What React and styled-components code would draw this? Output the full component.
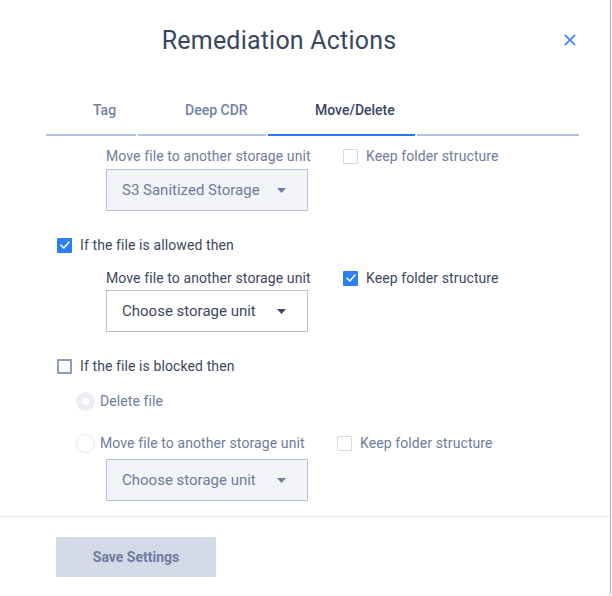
import styled, { createGlobalStyle } from 'styled-components';

const GlobalStyle = createGlobalStyle`
  html, body { margin: 0; padding: 0; background: #ffffff; }
  body { font-family: Roboto, "Liberation Sans", sans-serif; }
`;

const CheckIcon = () => (
  <svg width="10" height="8" viewBox="0 0 10 8" fill="none">
    <path d="M1 4.2 L3.8 7 L9 1" stroke="#ffffff" strokeWidth="1.6" strokeLinecap="round" strokeLinejoin="round" />
  </svg>
);

const Caret = ({ muted }) => (
  <svg width="9" height="5" viewBox="0 0 9 5">
    <path d="M0 0 H9 L4.5 5 Z" fill={muted ? '#6f7b9c' : '#3d4761'} />
  </svg>
);

const CheckBox = ({ checked, tone }) => (
  <Box $checked={checked} $tone={tone}>{checked && <CheckIcon />}</Box>
);

const Select = ({ value, muted }) => (
  <SelectBox $muted={muted}>
    <span>{value}</span>
    <Caret muted={muted} />
  </SelectBox>
);

const App = () => {
  return (
    <>
      <GlobalStyle />
      <Modal>
        <Header>
          <Title>Remediation Actions</Title>
          <Close aria-label="close">
            <svg width="12" height="12" viewBox="0 0 12 12">
              <path d="M1 1 L11 11 M11 1 L1 11" stroke="#2979ff" strokeWidth="1.6" />
            </svg>
          </Close>
        </Header>

        <Tabs>
          <Tab $w={90}>Tag</Tab>
          <Tab $w={128}>Deep CDR</Tab>
          <Tab $w={147} $active>Move/Delete</Tab>
          <Tab $w={162} />
        </Tabs>

        <Content>
          <SubRow $top={10}>
            <Field>
              <Label $muted>Move file to another storage unit</Label>
              <Select value="S3 Sanitized Storage" muted />
            </Field>
            <Option>
              <CheckBox tone="light" />
              <Label $muted>Keep folder structure</Label>
            </Option>
          </SubRow>

          <Option $top={24} $left={57}>
            <CheckBox checked />
            <Label>If the file is allowed then</Label>
          </Option>

          <SubRow $top={13}>
            <Field $gap={2}>
              <Label>Move file to another storage unit</Label>
              <Select value="Choose storage unit" />
            </Field>
            <Option>
              <CheckBox checked />
              <Label>Keep folder structure</Label>
            </Option>
          </SubRow>

          <Option $top={24} $left={57}>
            <CheckBox tone="mid" />
            <Label>If the file is blocked then</Label>
          </Option>

          <RadioRow $top={15}>
            <Radio $filled />
            <Label $muted>Delete file</Label>
          </RadioRow>

          <RadioRow $top={22}>
            <Radio />
            <Label $muted>Move file to another storage unit</Label>
            <Keep>
              <CheckBox tone="light" />
              <Label $muted>Keep folder structure</Label>
            </Keep>
          </RadioRow>

          <SelectWrap>
            <Select value="Choose storage unit" muted />
          </SelectWrap>
        </Content>

        <Footer>
          <SaveButton>Save Settings</SaveButton>
        </Footer>
      </Modal>
    </>
  );
};

export default App;

const Modal = styled.div`
  width: 610px;
  height: 596px;
  border-right: 1px solid #aeb2bb;
  border-bottom-right-radius: 4px;
  background: #ffffff;
  display: flex;
  flex-direction: column;
  overflow: hidden;
`;

const Header = styled.header`
  display: flex;
  align-items: center;
  height: 80px;
  padding-right: 28px;
`;

const Title = styled.h1`
  flex: 1;
  margin: 0;
  text-align: center;
  font-size: 25px;
  font-weight: 400;
  color: #3a4561;
  letter-spacing: 0.2px;
`;

const Close = styled.button`
  width: 24px;
  height: 24px;
  padding: 0;
  border: none;
  background: transparent;
  display: flex;
  align-items: center;
  justify-content: center;
  cursor: pointer;
`;

const Tabs = styled.nav`
  display: flex;
  gap: 2px;
  margin-left: 46px;
`;

const Tab = styled.div`
  width: ${p => p.$w}px;
  box-sizing: border-box;
  padding: 10px 0 14px 47px;
  height: 56px;
  display: flex;
  align-items: flex-end;
  line-height: 20px;
  font-size: 14px;
  font-weight: 500;
  color: ${p => (p.$active ? '#3a4561' : '#7381a6')};
  border-bottom: 2px solid ${p => (p.$active ? '#2979ff' : '#b6c0da')};
`;

const Content = styled.section`
  flex: 1;
  display: flex;
  flex-direction: column;
  border-bottom: 1px solid #e3e7ef;
`;

const SubRow = styled.div`
  display: flex;
  margin-top: ${p => p.$top || 0}px;
  padding-left: 106px;
`;

const Field = styled.div`
  width: 237px;
  display: flex;
  flex-direction: column;
  gap: ${p => p.$gap ?? 3}px;
`;

const Option = styled.label`
  display: flex;
  align-items: center;
  gap: 8px;
  height: 20px;
  margin-top: ${p => p.$top || 0}px;
  padding-left: ${p => p.$left || 0}px;
`;

const Keep = styled.label`
  position: absolute;
  left: 337px;
  top: 0;
  display: flex;
  align-items: center;
  gap: 8px;
  height: 20px;
`;

const Label = styled.span`
  font-size: 14px;
  line-height: 20px;
  letter-spacing: 0.1px;
  color: ${p => (p.$muted ? '#6f7b9c' : '#3d4761')};
  white-space: nowrap;
`;

const Box = styled.span`
  width: 15px;
  height: 15px;
  box-sizing: border-box;
  display: inline-flex;
  align-items: center;
  justify-content: center;
  border-radius: 1px;
  background: ${p => (p.$checked ? '#2b7ff7' : '#ffffff')};
  border: ${p =>
    p.$checked ? 'none' : p.$tone === 'mid' ? '2px solid #8c9bc0' : '1.5px solid #d4d9e5'};
`;

const SelectBox = styled.div`
  width: 202px;
  height: 42px;
  box-sizing: border-box;
  display: flex;
  align-items: center;
  justify-content: space-between;
  padding: 0 21px 0 15px;
  background: ${p => (p.$muted ? '#f3f4f8' : '#ffffff')};
  border: 1px solid #b7c1da;
  font-size: 15px;
  color: ${p => (p.$muted ? '#6f7b9c' : '#3d4761')};
`;

const RadioRow = styled.div`
  position: relative;
  display: flex;
  align-items: center;
  gap: 5px;
  height: 20px;
  margin-top: ${p => p.$top || 0}px;
  padding-left: 76px;
`;

const Radio = styled.span`
  width: 19px;
  height: 19px;
  box-sizing: border-box;
  border-radius: 50%;
  display: inline-flex;
  align-items: center;
  justify-content: center;
  background: ${p => (p.$filled ? '#eceef4' : '#ffffff')};
  border: ${p => (p.$filled ? 'none' : '1.5px solid #e6e9f0')};

  &::after {
    content: '';
    display: ${p => (p.$filled ? 'block' : 'none')};
    width: 7px;
    height: 7px;
    border-radius: 50%;
    background: #ffffff;
  }
`;

const SelectWrap = styled.div`
  margin-top: 6px;
  padding-left: 106px;
`;

const Footer = styled.footer`
  height: 79px;
  padding: 20px 0 0 56px;
  box-sizing: border-box;
`;

const SaveButton = styled.button`
  width: 160px;
  height: 40px;
  border: none;
  background: #d3d9e6;
  color: #6e7ca2;
  font-family: Roboto, "Liberation Sans", sans-serif;
  font-size: 14px;
  font-weight: 700;
`;
